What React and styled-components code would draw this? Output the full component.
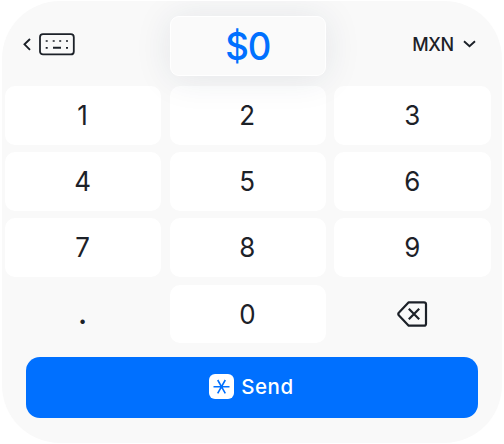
import React, { useState } from 'react';
import styled, { createGlobalStyle } from 'styled-components';

const GlobalStyle = createGlobalStyle`
  body {
    margin: 0;
    background: #ffffff;
    font-family: Inter, 'Liberation Sans', sans-serif;
    color: #1c2128;
  }
  button {
    border: none;
    padding: 0;
    background: none;
    color: inherit;
    font-family: inherit;
    cursor: pointer;
  }
`;

const Panel = styled.main`
  box-sizing: border-box;
  width: 500px;
  height: 442px;
  margin: 1px 2px;
  padding: 15px 12px 25px 3.3px;
  border-radius: 58px;
  background: #f9f9f9;
  overflow: hidden;
`;

const Header = styled.header`
  display: grid;
  grid-template-columns: repeat(3, 156.2px);
  column-gap: 8.4px;
  height: 60px;
  margin-bottom: 9.8px;
`;

const BackButton = styled.button`
  display: flex;
  align-items: center;
  gap: 8px;
  padding: 0 0 4px 17.7px;
`;

const Amount = styled.output`
  position: relative;
  z-index: 1;
  box-sizing: border-box;
  display: flex;
  align-items: center;
  justify-content: center;
  border: 1px solid #ffffff;
  border-radius: 9px;
  background: #fafafa;
  box-shadow: 0 2px 36px rgba(28, 45, 75, 0.1);
  color: #0070ff;
  font-size: 38.5px;
  font-weight: 500;
  letter-spacing: -1px;

  span {
    padding-bottom: 1px;
    transform: scaleX(0.95);
  }
`;

const Currency = styled.button`
  display: flex;
  align-items: center;
  justify-content: flex-end;
  gap: 9px;
  padding: 0 15px 4px 0;
  font-size: 18px;
  font-weight: 500;
  letter-spacing: -0.4px;
`;

const Keys = styled.div`
  display: grid;
  grid-template-columns: repeat(3, 156.2px);
  grid-auto-rows: 58.8px;
  gap: 7.5px 8.4px;
`;

const Key = styled.button`
  display: flex;
  align-items: center;
  justify-content: center;
  border-radius: 10px;
  background: ${({ $plain }) => ($plain ? 'transparent' : '#ffffff')};
  font-size: 27px;
  font-weight: ${({ $plain }) => ($plain ? 700 : 400)};
  line-height: 1;

  span {
    padding-right: 1px;
    transform: scaleX(0.96);
  }
`;

const SendButton = styled.button`
  display: flex;
  align-items: center;
  justify-content: center;
  gap: 7px;
  width: 452px;
  height: 61.3px;
  margin: 13.2px 0 0 20.7px;
  padding: 0 1px 2px 0;
  border-radius: 14px;
  background: #0070ff;
  color: #ffffff;
  font-size: 20.5px;
  font-weight: 500;
  letter-spacing: 0.6px;
`;

const SendBadge = styled.span`
  display: flex;
  width: 25px;
  height: 25px;
  border-radius: 6px;
  background: #ffffff;
  color: #0070ff;
`;

const ChevronLeft = () => (
  <svg width="8" height="13" viewBox="0 0 8 13" fill="none" stroke="currentColor" strokeWidth="1.9">
    <path d="M7 1 1.5 6.3 7 11.8" />
  </svg>
);

const KeyboardIcon = () => (
  <svg width="36" height="23" viewBox="0 0 36 23" fill="none" stroke="currentColor">
    <rect x="1" y="1.2" width="33.8" height="20.2" rx="3" strokeWidth="1.8" />
    <path d="M6.7 8h2M13.7 8h2M20.2 8h2M27 8h2M6.7 14.8h2M27 14.8h2" strokeWidth="1.7" />
    <path d="M14 14.8h8" strokeWidth="2" />
  </svg>
);

const ChevronDown = () => (
  <svg width="13" height="8" viewBox="0 0 13 8" fill="none" stroke="currentColor" strokeWidth="1.9">
    <path d="m1 1.3 5.5 5 5.5-5" />
  </svg>
);

const DeleteIcon = () => (
  <svg width="32" height="26" viewBox="0 0 32 26" fill="none" stroke="currentColor" strokeWidth="2.2" strokeLinejoin="round">
    <path d="M11.7 1.3H27q2 0 2 2v19.4q0 2-2 2H11.7L2 14.5q-1.5-1.5 0-3Z" />
    <path d="m11.8 7.8 10.4 10.4m0-10.4-10.4 10.4" />
  </svg>
);

const StarIcon = () => (
  <svg width="25" height="25" viewBox="0 0 25 25" fill="none" stroke="currentColor" strokeWidth="1.6">
    <path d="M4.5 12.7h16M8.7 6l7.6 13.4M16.3 6 8.7 19.4" />
    <circle cx="12.5" cy="12.7" r="1.5" fill="currentColor" stroke="none" />
  </svg>
);

const keys = ['1', '2', '3', '4', '5', '6', '7', '8', '9', '.', '0'];

const App = () => {
  const [amount, setAmount] = useState('0');

  const press = (key) => {
    if (key === '.' && amount.includes('.')) return;
    setAmount(amount === '0' && key !== '.' ? key : amount + key);
  };

  return (
    <>
      <GlobalStyle />
      <Panel>
        <Header>
          <BackButton aria-label="Back">
            <ChevronLeft />
            <KeyboardIcon />
          </BackButton>
          <Amount>
            <span>${amount}</span>
          </Amount>
          <Currency>
            MXN
            <ChevronDown />
          </Currency>
        </Header>
        <Keys>
          {keys.map((key) => (
            <Key key={key} $plain={key === '.'} onClick={() => press(key)}>
              <span>{key}</span>
            </Key>
          ))}
          <Key $plain aria-label="Delete" onClick={() => setAmount(amount.slice(0, -1) || '0')}>
            <DeleteIcon />
          </Key>
        </Keys>
        <SendButton>
          <SendBadge>
            <StarIcon />
          </SendBadge>
          Send
        </SendButton>
      </Panel>
    </>
  );
};

export default App;
